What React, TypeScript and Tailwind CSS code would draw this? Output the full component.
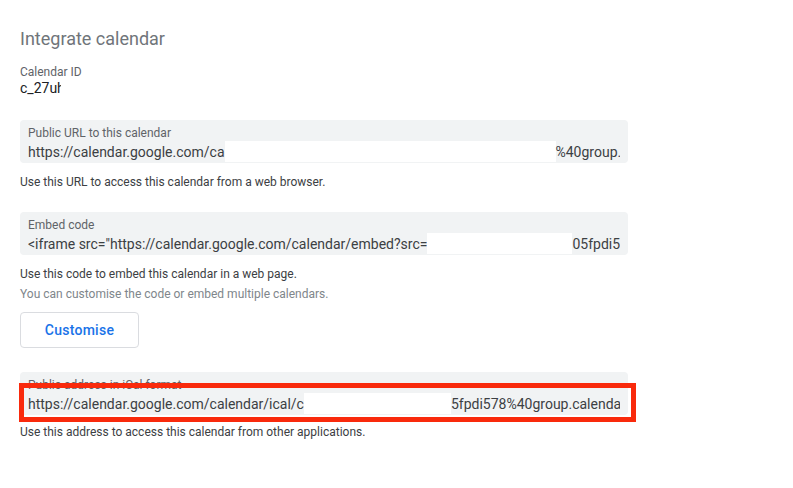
import React from "react";

// White block standing in for the redacted part of a value
function Redacted({ width }: { width: string }) {
  return <span className={`inline-block h-[21px] align-[-5px] bg-white ${width}`}></span>;
}

function ValueBox({
  label,
  children,
  highlight,
}: {
  label: string;
  children: React.ReactNode;
  highlight?: boolean;
}) {
  return (
    <div className="relative w-[608px] rounded-[4px] bg-[#f1f3f4] pl-2 pr-2 pt-[5px] pb-[1px]">
      <div className="text-[12px] leading-4 text-[#5f6368]">{label}</div>
      <div className="overflow-hidden whitespace-nowrap text-[14px] leading-5 text-[#3c4043]">
        {children}
      </div>
      {highlight && (
        <div className="absolute left-[-1px] top-[11px] h-[39px] w-[617px] border-[5px] border-[#f92a0c]"></div>
      )}
    </div>
  );
}

function HelpText({ children, muted }: { children: React.ReactNode; muted?: boolean }) {
  return (
    <div className={`text-[12px] leading-4 ${muted ? "text-[#80868b]" : "text-[#3c4043]"}`}>
      {children}
    </div>
  );
}

export default function App() {
  return (
    <div className="min-h-[488px] w-[793px] bg-white px-5 pt-[27px] font-['Roboto',sans-serif]">
      <h2 className="text-[18px] leading-6 text-[#70757a]">Integrate calendar</h2>

      <div className="mt-[14px]">
        <div className="text-[12px] leading-[14px] text-[#5f6368]">Calendar ID</div>
        <div className="w-[41px] overflow-hidden whitespace-nowrap text-[14px] leading-[18px] text-[#202124]">
          c_27uh
        </div>
      </div>

      <div className="mt-[23px]">
        <ValueBox label="Public URL to this calendar">
          https://calendar.google.com/ca
          <Redacted width="w-[331px]" />
          %40group.calendar.google.com
        </ValueBox>
        <div className="mt-[11px]">
          <HelpText>Use this URL to access this calendar from a web browser.</HelpText>
        </div>
      </div>

      <div className="mt-[22px]">
        <ValueBox label="Embed code">
          &lt;iframe src="https://calendar.google.com/calendar/embed?src=
          <Redacted width="w-[145px]" />
          05fpdi578%40group.calendar.google.com
        </ValueBox>
        <div className="mt-[11px] flex flex-col gap-1">
          <HelpText>Use this code to embed this calendar in a web page.</HelpText>
          <HelpText muted>You can customise the code or embed multiple calendars.</HelpText>
        </div>
        <button className="mt-[10px] h-9 w-[119px] rounded-[4px] border border-[#dadce0] bg-white text-[14px] font-medium tracking-[0.25px] text-[#1a73e8]">
          Customise
        </button>
      </div>

      <div className="mt-[24px]">
        <ValueBox label="Public address in iCal format" highlight>
          https://calendar.google.com/calendar/ical/c
          <Redacted width="w-[147px]" />
          5fpdi578%40group.calendar.google.com/public/basic.ics
        </ValueBox>
        <div className="mt-[9px]">
          <HelpText>Use this address to access this calendar from other applications.</HelpText>
        </div>
      </div>
    </div>
  );
}
